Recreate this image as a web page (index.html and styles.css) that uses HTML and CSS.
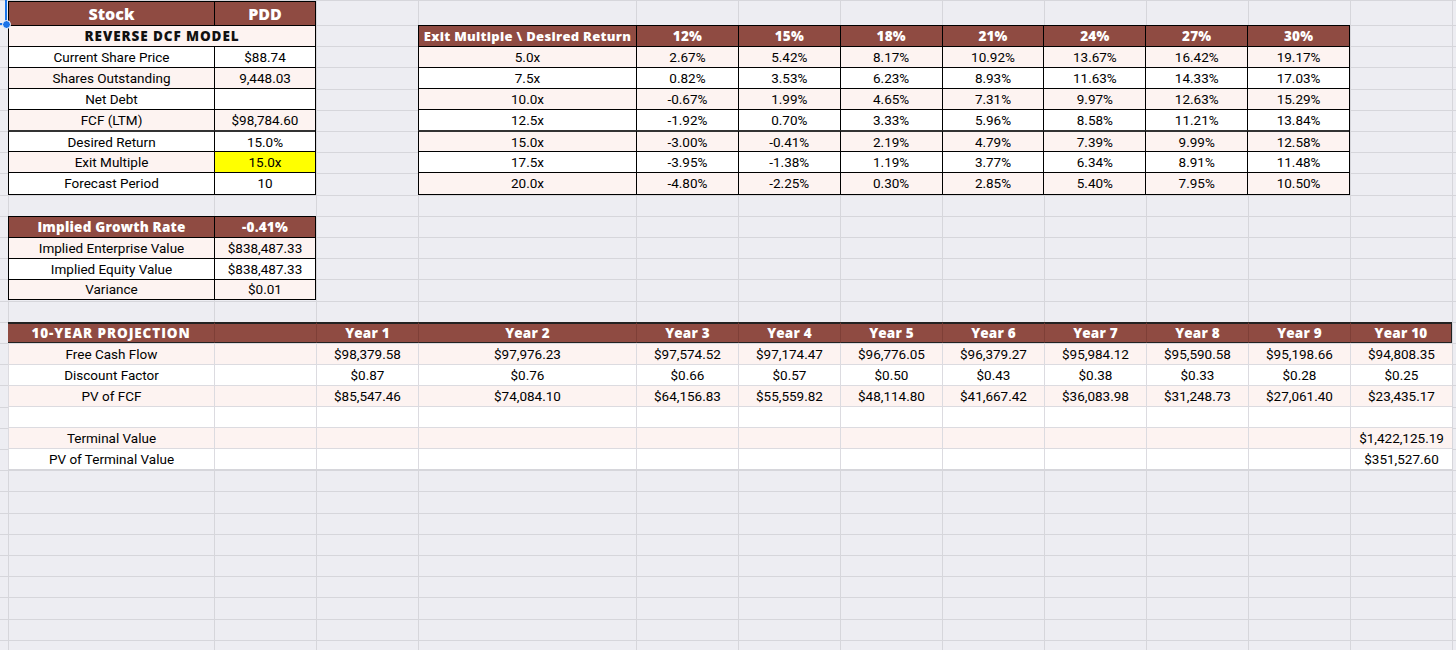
FILE: index.html
```html
<!DOCTYPE html>
<html lang="en">
<head>
<meta charset="utf-8">
<title>Reverse DCF Model – PDD</title>
<link rel="stylesheet" href="styles.css">
</head>
<body>
<div class="sheet">
  <div class="sel"><span class="sel-dot"></span></div>

  <section class="tbl model">
    <div class="r head"><div class="c h title">Stock</div><div class="c h title">PDD</div></div>
    <div class="r pink"><div class="c span2 bold caps">REVERSE DCF MODEL</div></div>
    <div class="r"><div class="c">Current Share Price</div><div class="c">$88.74</div></div>
    <div class="r pink"><div class="c">Shares Outstanding</div><div class="c">9,448.03</div></div>
    <div class="r"><div class="c">Net Debt</div><div class="c"></div></div>
    <div class="r pink"><div class="c">FCF (LTM)</div><div class="c">$98,784.60</div></div>
    <div class="r thick"><div class="c">Desired Return</div><div class="c">15.0%</div></div>
    <div class="r pink"><div class="c">Exit Multiple</div><div class="c yellow">15.0x</div></div>
    <div class="r"><div class="c">Forecast Period</div><div class="c">10</div></div>
  </section>

  <section class="tbl implied">
    <div class="r head"><div class="c h">Implied Growth Rate</div><div class="c h">-0.41%</div></div>
    <div class="r pink"><div class="c">Implied Enterprise Value</div><div class="c">$838,487.33</div></div>
    <div class="r"><div class="c">Implied Equity Value</div><div class="c">$838,487.33</div></div>
    <div class="r pink"><div class="c">Variance</div><div class="c">$0.01</div></div>
  </section>

  <section class="tbl sens">
    <div class="r head"><div class="c h">Exit Multiple \ Desired Return</div><div class="c h">12%</div><div class="c h">15%</div><div class="c h">18%</div><div class="c h">21%</div><div class="c h">24%</div><div class="c h">27%</div><div class="c h">30%</div></div>
    <div class="r pink"><div class="c">5.0x</div><div class="c">2.67%</div><div class="c">5.42%</div><div class="c">8.17%</div><div class="c">10.92%</div><div class="c">13.67%</div><div class="c">16.42%</div><div class="c">19.17%</div></div>
    <div class="r"><div class="c">7.5x</div><div class="c">0.82%</div><div class="c">3.53%</div><div class="c">6.23%</div><div class="c">8.93%</div><div class="c">11.63%</div><div class="c">14.33%</div><div class="c">17.03%</div></div>
    <div class="r pink"><div class="c">10.0x</div><div class="c">-0.67%</div><div class="c">1.99%</div><div class="c">4.65%</div><div class="c">7.31%</div><div class="c">9.97%</div><div class="c">12.63%</div><div class="c">15.29%</div></div>
    <div class="r"><div class="c">12.5x</div><div class="c">-1.92%</div><div class="c">0.70%</div><div class="c">3.33%</div><div class="c">5.96%</div><div class="c">8.58%</div><div class="c">11.21%</div><div class="c">13.84%</div></div>
    <div class="r pink thick"><div class="c">15.0x</div><div class="c">-3.00%</div><div class="c">-0.41%</div><div class="c">2.19%</div><div class="c">4.79%</div><div class="c">7.39%</div><div class="c">9.99%</div><div class="c">12.58%</div></div>
    <div class="r"><div class="c">17.5x</div><div class="c">-3.95%</div><div class="c">-1.38%</div><div class="c">1.19%</div><div class="c">3.77%</div><div class="c">6.34%</div><div class="c">8.91%</div><div class="c">11.48%</div></div>
    <div class="r pink"><div class="c">20.0x</div><div class="c">-4.80%</div><div class="c">-2.25%</div><div class="c">0.30%</div><div class="c">2.85%</div><div class="c">5.40%</div><div class="c">7.95%</div><div class="c">10.50%</div></div>
  </section>

  <section class="tbl proj">
    <div class="r head"><div class="c h caps">10-YEAR PROJECTION</div><div class="c h"></div><div class="c h">Year 1</div><div class="c h">Year 2</div><div class="c h">Year 3</div><div class="c h">Year 4</div><div class="c h">Year 5</div><div class="c h">Year 6</div><div class="c h">Year 7</div><div class="c h">Year 8</div><div class="c h">Year 9</div><div class="c h">Year 10</div></div>
    <div class="r pink"><div class="c">Free Cash Flow</div><div class="c"></div><div class="c">$98,379.58</div><div class="c">$97,976.23</div><div class="c">$97,574.52</div><div class="c">$97,174.47</div><div class="c">$96,776.05</div><div class="c">$96,379.27</div><div class="c">$95,984.12</div><div class="c">$95,590.58</div><div class="c">$95,198.66</div><div class="c">$94,808.35</div></div>
    <div class="r"><div class="c">Discount Factor</div><div class="c"></div><div class="c">$0.87</div><div class="c">$0.76</div><div class="c">$0.66</div><div class="c">$0.57</div><div class="c">$0.50</div><div class="c">$0.43</div><div class="c">$0.38</div><div class="c">$0.33</div><div class="c">$0.28</div><div class="c">$0.25</div></div>
    <div class="r pink"><div class="c">PV of FCF</div><div class="c"></div><div class="c">$85,547.46</div><div class="c">$74,084.10</div><div class="c">$64,156.83</div><div class="c">$55,559.82</div><div class="c">$48,114.80</div><div class="c">$41,667.42</div><div class="c">$36,083.98</div><div class="c">$31,248.73</div><div class="c">$27,061.40</div><div class="c">$23,435.17</div></div>
    <div class="r"><div class="c"></div><div class="c"></div><div class="c"></div><div class="c"></div><div class="c"></div><div class="c"></div><div class="c"></div><div class="c"></div><div class="c"></div><div class="c"></div><div class="c"></div><div class="c"></div></div>
    <div class="r pink"><div class="c">Terminal Value</div><div class="c"></div><div class="c"></div><div class="c"></div><div class="c"></div><div class="c"></div><div class="c"></div><div class="c"></div><div class="c"></div><div class="c"></div><div class="c"></div><div class="c">$1,422,125.19</div></div>
    <div class="r"><div class="c">PV of Terminal Value</div><div class="c"></div><div class="c"></div><div class="c"></div><div class="c"></div><div class="c"></div><div class="c"></div><div class="c"></div><div class="c"></div><div class="c"></div><div class="c"></div><div class="c">$351,527.60</div></div>
  </section>
</div>
</body>
</html>
```
FILE: styles.css
```css
* { box-sizing: border-box; }

html, body {
  margin: 0;
  padding: 0;
  background: #ededf2;
  overflow: hidden;
}

.sheet {
  width: 1456px;
  height: 660px;
  display: grid;
  grid-template-columns: 8px 206px 102px 102px 218px repeat(8, 102px) 4px;
  grid-template-rows: 24px repeat(30, 21.2px);
  border-top: 1px solid #d6d6db;
  background-color: #ededf2;
  background-image:
    repeating-linear-gradient(to bottom, #d6d6db 0 1px, transparent 1px 21.2px),
    linear-gradient(to right,
      transparent 0 8px, #d6d6db 8px 9px,
      transparent 9px 214px, #d6d6db 214px 215px,
      transparent 215px 316px, #d6d6db 316px 317px,
      transparent 317px 418px, #d6d6db 418px 419px,
      transparent 419px 636px, #d6d6db 636px 637px,
      transparent 637px 738px, #d6d6db 738px 739px,
      transparent 739px 840px, #d6d6db 840px 841px,
      transparent 841px 942px, #d6d6db 942px 943px,
      transparent 943px 1044px, #d6d6db 1044px 1045px,
      transparent 1045px 1146px, #d6d6db 1146px 1147px,
      transparent 1147px 1248px, #d6d6db 1248px 1249px,
      transparent 1249px 1350px, #d6d6db 1350px 1351px,
      transparent 1351px 1452px, #d6d6db 1452px 1453px,
      transparent 1453px);
  background-position: 0 24px, 0 0;
  background-size: 100% calc(100% - 24px), 100% 100%;
  background-repeat: no-repeat;
  font-family: Roboto, "Liberation Sans", sans-serif;
  font-size: 13.5px;
  color: #000;
}

/* selected cell handle (column gutter) */
.sel {
  grid-column: 1;
  grid-row: 1;
  position: relative;
  border-right: 2px solid #1a73e8;
  border-bottom: 2px solid #1a73e8;
  margin-top: -1px;
  margin-right: 1px;
}
.sel-dot {
  position: absolute;
  right: -6px;
  bottom: -6px;
  width: 9px;
  height: 9px;
  border-radius: 50%;
  background: #1a73e8;
  border: 1px solid #fff;
  z-index: 2;
}

/* tables */
.tbl {
  display: flex;
  flex-direction: column;
  border-right: 1px solid #000;
  border-bottom: 1px solid #000;
}
.model   { grid-column: 2 / 4;  grid-row: 1 / 10; }
.implied { grid-column: 2 / 4;  grid-row: 11 / 15; }
.sens    { grid-column: 5 / 13; grid-row: 2 / 10; }
.proj    { grid-column: 2 / 14; grid-row: 16 / 23; border-right: 0; border-bottom: 1px solid #d6d6db; }

.r {
  flex: 1 1 0;
  display: grid;
  background: #fff;
  min-height: 0;
}
.r.pink { background: #fdf3f1; }
.model .r.head { flex: 0 0 24px; }

.model .r, .implied .r { grid-template-columns: 206px 1fr; }
.sens .r { grid-template-columns: 218px repeat(7, 1fr); }
.proj .r { grid-template-columns: 206px 102px 102px 218px repeat(8, 1fr); }

.c {
  display: flex;
  align-items: center;
  justify-content: center;
  border-left: 1px solid #000;
  border-top: 1px solid #000;
  white-space: nowrap;
  overflow: hidden;
  min-width: 0;
}
.r.thick .c { border-top: 2px solid #333; }
.span2 { grid-column: 1 / -1; }

.h {
  background: #8f4b42;
  color: #fff;
  font-family: "Open Sans", "Liberation Sans", sans-serif;
  font-weight: 800;
  font-size: 13.5px;
  letter-spacing: 0.2px;
}
.title { font-size: 16px; letter-spacing: 0; }
.bold {
  font-family: "Open Sans", "Liberation Sans", sans-serif;
  font-weight: 800;
  font-size: 13.5px;
  color: #111;
}
.caps { letter-spacing: 0.9px; }
.yellow { background: #ffff00; }

.sens .r.head .c:first-child { font-size: 13px; letter-spacing: 0.3px; }

/* projection: light grid inside, dark rule around header */
.proj .c { border-left: 1px solid #dcdbe0; border-top: 1px solid #dcdbe0; }
.proj .r.head .c {
  border-top: 2px solid #222;
  border-bottom: 1px solid #222;
  border-left: 1px solid #7e3f37;
}
.proj .r.head .c:first-child { border-left: 0; }
.proj .r.head .c:last-child { border-right: 1px solid #222; }
```
